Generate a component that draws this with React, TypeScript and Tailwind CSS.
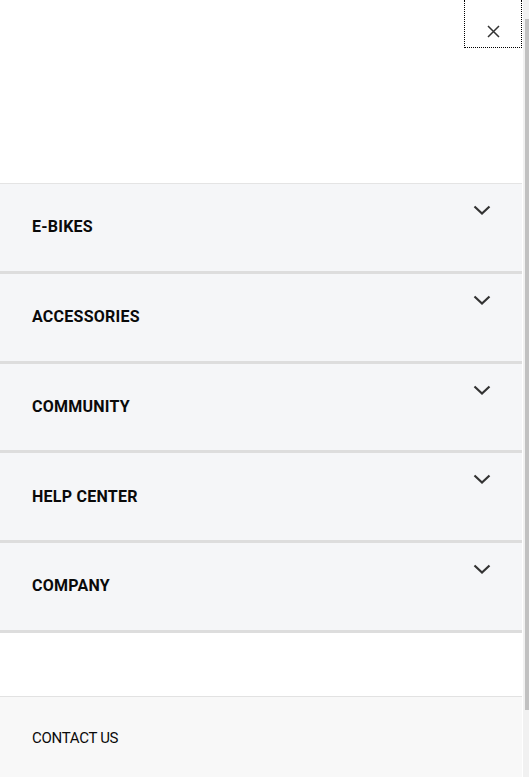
import React from 'react';

const items = ['E-BIKES', 'ACCESSORIES', 'COMMUNITY', 'HELP CENTER', 'COMPANY'];

function Chevron() {
  return (
    <svg width="18" height="10" viewBox="0 0 18 10" fill="none" className="block">
      <path d="M1.5 1.5 L9 8.5 L16.5 1.5" stroke="#333" strokeWidth="2.2" />
    </svg>
  );
}

export default function App() {
  return (
    <div className="relative h-[777px] w-[529px] overflow-hidden bg-white font-['Roboto',_'Liberation_Sans',_sans-serif] text-[#0a0a0a]">
      <div className="flex h-full w-[522px] flex-col">
        <div className="flex h-[183px] justify-end">
          <button className="flex h-[48px] w-[58px] items-center justify-center border border-dotted border-black border-t-0 pt-[16px]">
            <svg width="13" height="13" viewBox="0 0 13 13" fill="none">
              <path d="M1 1 L12 12 M12 1 L1 12" stroke="#333" strokeWidth="1.5" />
            </svg>
          </button>
        </div>
        <div className="border-t border-[#e4e4e4]">
          {items.map((label) => (
            <div
              key={label}
              className="relative flex h-[89.75px] items-center border-b-[3px] border-[#dddddd] bg-[#f5f6f8] pl-8"
            >
              <span className="text-[16px] font-bold tracking-[0.25px]">{label}</span>
              <div className="absolute right-[31px] top-[21px]">
                <Chevron />
              </div>
            </div>
          ))}
        </div>
        <div className="h-[63px]" />
        <div className="flex-1 border-t border-[#e2e2e2] bg-[#f8f8f8] pl-8 pt-[29px]">
          <span className="text-[15px] tracking-[-0.3px]">CONTACT US</span>
        </div>
      </div>
      <div className="absolute right-0 top-0 h-full w-[6px] bg-[#f1f1f1]">
        <div className="ml-[2px] mt-[19px] h-[691px] w-[4px] bg-[#c1c1c1]" />
      </div>
    </div>
  );
}
